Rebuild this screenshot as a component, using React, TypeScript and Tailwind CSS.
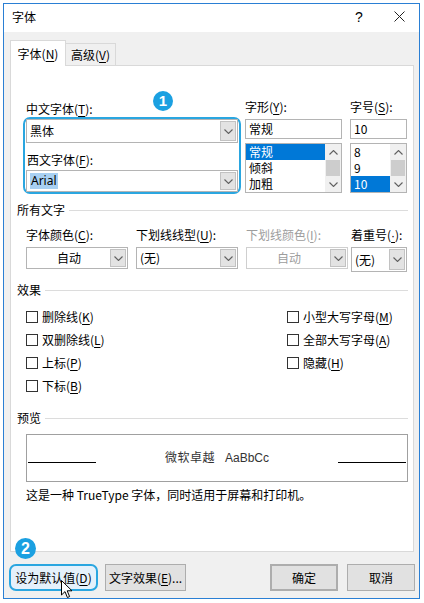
import React from "react";

const Key = ({ k }: { k: string }) => <span className="underline underline-offset-2">{k}</span>;

const Chevron = ({ up = false, color = "#606060" }: { up?: boolean; color?: string }) => (
  <svg width="9" height="5" viewBox="0 0 9 5" className={up ? "rotate-180" : ""}>
    <path d="M0.5 0.5L4.5 4.5L8.5 0.5" fill="none" stroke={color} strokeWidth="1.1" />
  </svg>
);

const Arrow = () => (
  <div className="w-[16px] shrink-0 bg-[#e3e3e3] border border-[#c2c2c2] flex items-center justify-center">
    <Chevron />
  </div>
);

const Combo = ({
  children,
  h,
  center = false,
  disabled = false,
}: {
  children: React.ReactNode;
  h: string;
  center?: boolean;
  disabled?: boolean;
}) => (
  <div className={`${h} flex bg-white border ${disabled ? "border-[#cfcfcf]" : "border-[#b4b4b4]"} p-px`}>
    <div
      className={`flex-1 flex items-center ${center ? "justify-center" : "pl-[2px]"} ${
        disabled ? "text-[#9d9d9d]" : ""
      }`}
    >
      {children}
    </div>
    <Arrow />
  </div>
);

const ListBox = ({ items, selected }: { items: string[]; selected: number }) => (
  <div className="h-[50px] mt-[4px] flex bg-white border border-[#b4b4b4]">
    <div className="flex-1 flex flex-col">
      {items.map((it, i) => (
        <div
          key={it}
          className={`h-[16px] leading-[16px] pl-[3px] ${i === selected ? "bg-[#0078d7] text-white" : ""}`}
        >
          {it}
        </div>
      ))}
    </div>
    <div className="w-[16px] bg-[#f0f0f0] flex flex-col">
      <div className="h-[16px] flex items-center justify-center">
        <Chevron up />
      </div>
      <div className="h-[16px] mx-[1px] bg-[#cdcdcd]" />
      <div className="h-[16px] flex items-center justify-center">
        <Chevron />
      </div>
    </div>
  </div>
);

const Section = ({ title }: { title: string }) => (
  <div className="flex items-center h-[16px] pl-[6px] pr-[5px]">
    <span>{title}</span>
    <div className="flex-1 h-px bg-[#dcdcdc] ml-[4px]" />
  </div>
);

const Check = ({ children }: { children: React.ReactNode }) => (
  <div className="h-[23px] flex items-center">
    <div className="w-[12px] h-[12px] border border-[#333] bg-white shrink-0" />
    <span className="ml-[4px]">{children}</span>
  </div>
);

const Btn = ({ children, w, extra = "" }: { children: React.ReactNode; w: string; extra?: string }) => (
  <div className={`${w} h-[27px] flex items-center justify-center bg-[#e1e1e1] border border-[#adadad] ${extra}`}>
    {children}
  </div>
);

export default function App() {
  return (
    <div className="relative w-[424px] h-[603px] bg-white overflow-hidden pt-[3px] pl-[3px] whitespace-nowrap text-[12px] leading-[16px] text-black font-['Noto_Sans_CJK_SC',sans-serif]">
      <div className="w-[417px] h-[596px] border border-[#2a7fd4] flex flex-col">
        {/* title bar */}
        <div className="h-[28px] bg-white flex items-center pl-[8px] pb-[3px]">
          <span className="text-[12px]">字体</span>
          <div className="ml-auto flex">
            <div className="w-[40px] flex items-center justify-center text-[14px] font-['Liberation_Sans',sans-serif]">?</div>
            <div className="w-[40px] flex items-center justify-center">
              <svg width="11" height="11" viewBox="0 0 11 11">
                <path d="M0.5 0.5L10.5 10.5M10.5 0.5L0.5 10.5" stroke="#222" strokeWidth="1" />
              </svg>
            </div>
          </div>
        </div>

        {/* body */}
        <div className="flex-1 bg-[#f0f0f0] pl-[6px] pr-[4px] pt-[8px] flex flex-col">
          <div className="h-[25px] flex items-end">
            <div className="relative z-10 w-[56px] h-[26px] -mb-px bg-white border border-b-0 border-[#d9d9d9] flex items-center justify-center">
              字体(<Key k="N" />)
            </div>
            <div className="w-[51px] h-[22px] -ml-px border border-b-0 border-[#d9d9d9] flex items-center justify-center">
              高级(<Key k="V" />)
            </div>
          </div>

          <div className="w-[404px] h-[487px] bg-white border border-[#d9d9d9]">
            {/* fonts row */}
            <div className="flex pl-[12px] pt-[35px]">
              <div className="w-[218px]">
                <div className="h-[16px] pl-[3px]">
                  中文字体(<Key k="T" />):
                </div>
                <div className="border-2 border-[#2aa6e0] rounded-[7px] px-px">
                  <Combo h="h-[24px]">黑体</Combo>
                  <div className="h-[27px] pt-[9px] pl-[1px]">
                    西文字体(<Key k="F" />):
                  </div>
                  <Combo h="h-[22px]">
                    <span className="bg-[#a8d0f2] px-px font-['Noto_Sans',sans-serif] text-[12px]">Arial</span>
                  </Combo>
                </div>
              </div>
              <div className="w-[97px] ml-[4px]">
                <div className="h-[16px] -mt-[2px] mb-[4px]">
                  字形(<Key k="Y" />):
                </div>
                <div className="h-[20px] bg-white border border-[#b4b4b4] flex items-center pl-[3px]">常规</div>
                <ListBox items={["常规", "倾斜", "加粗"]} selected={0} />
              </div>
              <div className="w-[57px] ml-[8px]">
                <div className="h-[16px] -mt-[2px] mb-[4px]">
                  字号(<Key k="S" />):
                </div>
                <div className="h-[20px] bg-white border border-[#b4b4b4] flex items-center pl-[3px]">10</div>
                <ListBox items={["8", "9", "10"]} selected={2} />
              </div>
            </div>

            {/* all text */}
            <div className="mt-[8px]">
              <Section title="所有文字" />
            </div>
            <div className="flex pl-[15px] mt-[9px]">
              <div className="w-[102px]">
                <div className="h-[16px] mb-[4px]">
                  字体颜色(<Key k="C" />):
                </div>
                <Combo h="h-[22px]" center>
                  自动
                </Combo>
              </div>
              <div className="w-[102px] ml-[8px]">
                <div className="h-[16px] mb-[4px]">
                  下划线线型(<Key k="U" />):
                </div>
                <Combo h="h-[22px]">(无)</Combo>
              </div>
              <div className="w-[102px] ml-[8px]">
                <div className="h-[16px] mb-[4px] text-[#9d9d9d]">
                  下划线颜色(<Key k="I" />):
                </div>
                <Combo h="h-[22px]" center disabled>
                  自动
                </Combo>
              </div>
              <div className="w-[56px] ml-[3px]">
                <div className="h-[16px] mb-[4px]">
                  着重号(<span className="underline underline-offset-2 font-['Liberation_Sans',sans-serif]">·</span>):
                </div>
                <Combo h="h-[25px]">(无)</Combo>
              </div>
            </div>

            {/* effects */}
            <div className="mt-[10px]">
              <Section title="效果" />
            </div>
            <div className="flex pl-[15px] mt-[7px]">
              <div className="w-[261px] flex flex-col">
                <Check>
                  删除线(<Key k="K" />)
                </Check>
                <Check>
                  双删除线(<Key k="L" />)
                </Check>
                <Check>
                  上标(<Key k="P" />)
                </Check>
                <Check>
                  下标(<Key k="B" />)
                </Check>
              </div>
              <div className="flex flex-col">
                <Check>
                  小型大写字母(<Key k="M" />)
                </Check>
                <Check>
                  全部大写字母(<Key k="A" />)
                </Check>
                <Check>
                  隐藏(<Key k="H" />)
                </Check>
              </div>
            </div>

            {/* preview */}
            <div className="mt-[13px]">
              <Section title="预览" />
            </div>
            <div className="ml-[15px] mt-[8px] w-[382px] h-[48px] border border-[#a0a0a0] flex items-center px-px">
              <div className="w-[68px] h-px bg-black mt-[8px]" />
              <div className="flex-1 text-center text-[12px] text-[#333] font-['Liberation_Sans','Noto_Sans_CJK_SC',sans-serif]">
                <span className="tracking-[0.5px]">微软卓越</span>
                <span className="ml-[10px] text-[12px]">AaBbCc</span>
              </div>
              <div className="w-[68px] h-px bg-black mt-[8px]" />
            </div>
            <div className="ml-[15px] mt-[5px] h-[16px]">这是一种 TrueType 字体，同时适用于屏幕和打印机。</div>
          </div>

          {/* buttons */}
          <div className="flex mt-[12px]">
            <div className="-ml-px w-[89px] h-[27px] flex items-center justify-center bg-[#e5f1fb] border-2 border-[#2aa6e0] rounded-[7px]">
              设为默认值(<Key k="D" />)
            </div>
            <Btn w="w-[81px]" extra="ml-[7px]">
              文字效果(<Key k="E" />)...
            </Btn>
            <Btn w="w-[68px]" extra="ml-auto border-2 border-[#0078d7]">
              确定
            </Btn>
            <Btn w="w-[68px]" extra="ml-[9px]">
              取消
            </Btn>
          </div>
        </div>
      </div>

      {/* callout badges */}
      <div className="absolute left-[153px] top-[91px] w-[20px] h-[20px] rounded-full bg-[#1ba0e1] text-white text-[15px] font-bold flex items-center justify-center font-['Liberation_Sans',sans-serif]">
        1
      </div>
      <div className="absolute left-[15px] top-[538px] w-[21px] h-[21px] rounded-full bg-[#1ba0e1] text-white text-[16px] font-bold flex items-center justify-center font-['Liberation_Sans',sans-serif]">
        2
      </div>

      {/* mouse cursor */}
      <svg className="absolute left-[61px] top-[580px]" width="12" height="19" viewBox="0 0 12 19">
        <path d="M0.5 0.5L0.5 15L4 11.6L6.4 17.5L8.6 16.6L6.2 10.8L11 10.8Z" fill="white" stroke="black" strokeWidth="1" strokeLinejoin="round" />
      </svg>
    </div>
  );
}
